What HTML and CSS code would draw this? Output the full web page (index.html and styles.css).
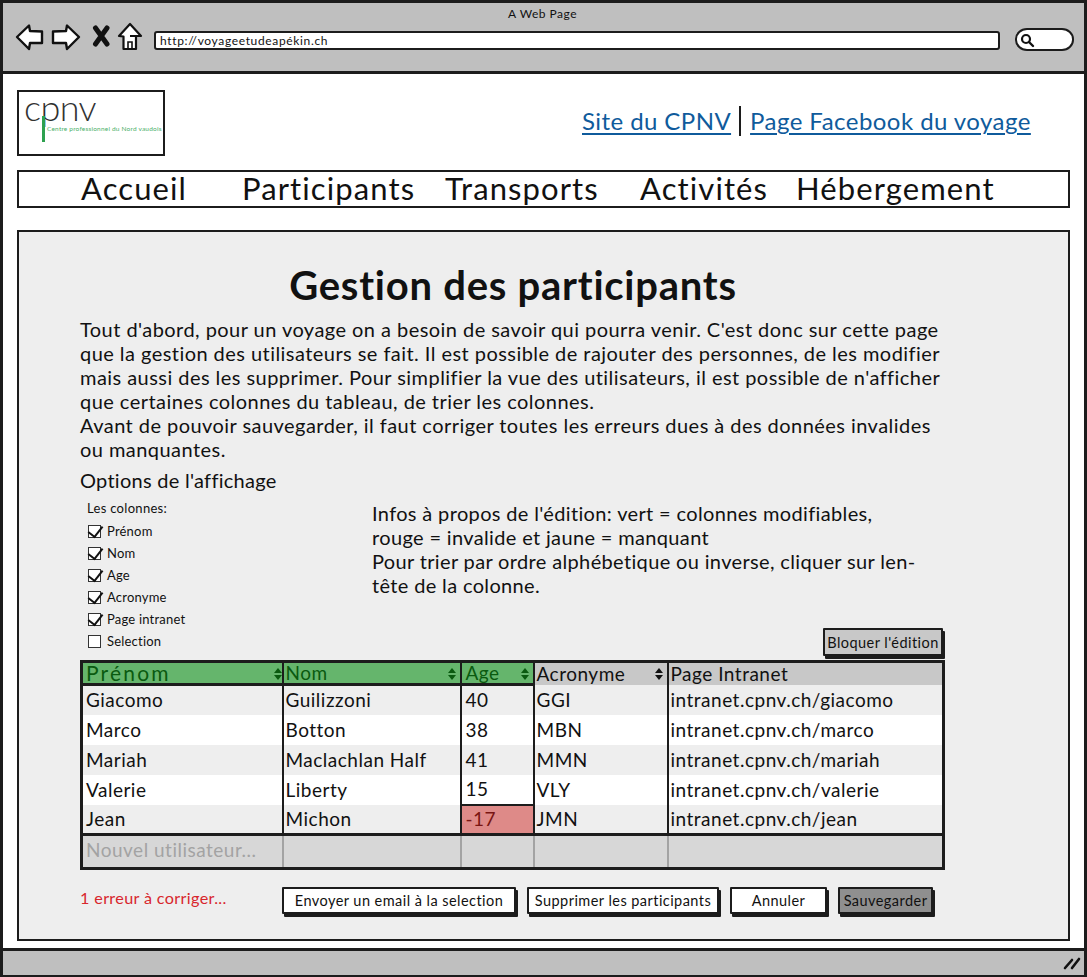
FILE: index.html
```html
<!DOCTYPE html>
<html lang="fr">
<head>
<meta charset="utf-8">
<title>A Web Page</title>
<link rel="stylesheet" href="styles.css">
</head>
<body>
<div class="window">
  <header class="chrome">
    <div class="chrome-title">A Web Page</div>
    <div class="chrome-row">
      <svg class="nav-icons" width="128" height="30" viewBox="0 0 128 30" aria-hidden="true">
        <path d="M2 15 L14 3.500 L15 9 L27 9.500 L27 21 L15 21 L14 27 Z" fill="#fff" stroke="#111" stroke-width="2.400" stroke-linejoin="round"/>
        <path d="M64 15 L52 3.500 L51 9 L38 9.500 L38 21 L51 21 L52 27 Z" fill="#fff" stroke="#111" stroke-width="2.400" stroke-linejoin="round"/>
        <path d="M80.500 6 L92 22 M92 6 L80.500 22" fill="none" stroke="#111" stroke-width="5" stroke-linecap="round"/>
        <path d="M115 14 L115 14 L126 14 L115 2 L104 14 L108.500 14.500 L108.500 27 L121 27 L121 14" fill="#fff" stroke="#111" stroke-width="2.200" stroke-linejoin="round"/>
        <path d="M113 27 L113 20 L117 20 L117 27" fill="none" stroke="#111" stroke-width="1.600"/>
      </svg>
      <div class="url-bar">http://voyageetudeapékin.ch</div>
      <div class="search-pill">
        <svg width="16" height="16" viewBox="0 0 16 16" aria-hidden="true">
          <circle cx="7" cy="7" r="4" fill="none" stroke="#111" stroke-width="2.200"/>
          <path d="M10 10 L14 14" stroke="#111" stroke-width="2.400" stroke-linecap="round"/>
        </svg>
      </div>
    </div>
  </header>

  <main class="page">
    <div class="top">
      <div class="logo">
        <div class="logo-word"><span>c</span><span class="logo-p">p</span><span>nv</span></div>
        <span class="logo-stem"></span>
        <div class="logo-sub">Centre professionnel du Nord vaudois</div>
      </div>
      <div class="links">
        <a class="link link-first" href="#">Site du CPNV</a>
        <a class="link link-second" href="#">Page Facebook du voyage</a>
      </div>
    </div>

    <nav class="menu">
      <span class="menu-item">Accueil</span>
      <span class="menu-item">Participants</span>
      <span class="menu-item">Transports</span>
      <span class="menu-item">Activités</span>
      <span class="menu-item">Hébergement</span>
    </nav>

    <section class="panel">
      <h1 class="title">Gestion des participants</h1>
      <p class="intro">Tout d'abord, pour un voyage on a besoin de savoir qui pourra venir. C'est donc sur cette page<br>
      que la gestion des utilisateurs se fait. Il est possible de rajouter des personnes, de les modifier<br>
      mais aussi des les supprimer. Pour simplifier la vue des utilisateurs, il est possible de n'afficher<br>
      que certaines colonnes du tableau, de trier les colonnes.<br>
      Avant de pouvoir sauvegarder, il faut corriger toutes les erreurs dues à des données invalides<br>
      ou manquantes.</p>
      <h2 class="options-title">Options de l'affichage</h2>

      <div class="options">
        <div class="columns">
          <div class="columns-label">Les colonnes:</div>
          <div class="check"><span class="box checked"></span>Prénom</div>
          <div class="check"><span class="box checked"></span>Nom</div>
          <div class="check"><span class="box checked"></span>Age</div>
          <div class="check"><span class="box checked"></span>Acronyme</div>
          <div class="check"><span class="box checked"></span>Page intranet</div>
          <div class="check"><span class="box"></span>Selection</div>
        </div>
        <div class="info">
          <p class="info-text">Infos à propos de l'édition: vert = colonnes modifiables,<br>
          rouge = invalide et jaune = manquant<br>
          Pour trier par ordre alphébetique ou inverse, cliquer sur len-<br>
          tête de la colonne.</p>
          <button class="btn btn-lock">Bloquer l'édition</button>
        </div>
      </div>

      <table class="grid">
        <colgroup>
          <col class="c1"><col class="c2"><col class="c3"><col class="c4"><col class="c5">
        </colgroup>
        <thead>
          <tr>
            <th class="green wide">Prénom<span class="sort"></span></th>
            <th class="green">Nom<span class="sort sort-in"></span></th>
            <th class="green">Age<span class="sort sort-in"></span></th>
            <th>Acronyme<span class="sort sort-in"></span></th>
            <th>Page Intranet</th>
          </tr>
        </thead>
        <tbody>
          <tr><td>Giacomo</td><td>Guilizzoni</td><td>40</td><td>GGI</td><td>intranet.cpnv.ch/giacomo</td></tr>
          <tr><td>Marco</td><td>Botton</td><td>38</td><td>MBN</td><td>intranet.cpnv.ch/marco</td></tr>
          <tr><td>Mariah</td><td>Maclachlan Half</td><td>41</td><td>MMN</td><td>intranet.cpnv.ch/mariah</td></tr>
          <tr><td>Valerie</td><td>Liberty</td><td>15</td><td>VLY</td><td>intranet.cpnv.ch/valerie</td></tr>
          <tr><td>Jean</td><td>Michon</td><td class="bad">-17</td><td>JMN</td><td>intranet.cpnv.ch/jean</td></tr>
          <tr class="new-row"><td>Nouvel utilisateur...</td><td></td><td></td><td></td><td></td></tr>
        </tbody>
      </table>

      <div class="actions">
        <span class="error">1 erreur à corriger...</span>
        <button class="btn btn-mail">Envoyer un email à la selection</button>
        <button class="btn btn-del">Supprimer les participants</button>
        <button class="btn btn-cancel">Annuler</button>
        <button class="btn btn-save">Sauvegarder</button>
      </div>
    </section>
  </main>

  <footer class="status">
    <svg width="18" height="14" viewBox="0 0 18 14" aria-hidden="true">
      <path d="M2 12 L9 4 M9 12 L16 3" stroke="#111" stroke-width="2.600" stroke-linecap="round"/>
    </svg>
  </footer>
</div>
</body>
</html>
```

FILE: styles.css
```css
* { box-sizing: border-box; }
html, body { margin: 0; padding: 0; background: #fff; }
body { font-family: "Lato", "Open Sans", sans-serif; color: #111; }

.window {
  width: 1087px;
  height: 977px;
  border: 3px solid #1c1c1c;
  border-bottom-width: 2px;
  display: flex;
  flex-direction: column;
  overflow: hidden;
  background: #fff;
}

/* browser chrome */
.chrome {
  height: 71px;
  flex: none;
  background: #bfbfbf;
  border-bottom: 3px solid #1c1c1c;
  display: flex;
  flex-direction: column;
}
.chrome-title {
  text-align: center;
  font-size: 12px;
  line-height: 14px;
  letter-spacing: .5px;
  padding-top: 4px;
  height: 18px;
  padding-right: 2px;
}
.chrome-row {
  display: flex;
  align-items: center;
  padding: 0 10px 0 12px;
  margin-top: 3px;
  height: 32px;
}
.nav-icons { flex: none; margin-right: 11px; margin-bottom: 6px; }
.url-bar {
  flex: none;
  width: 846px;
  height: 19px;
  background: #fff;
  border: 2px solid #1c1c1c;
  border-radius: 3px;
  font-size: 12px;
  line-height: 15px;
  letter-spacing: .65px;
  padding-left: 4px;
}
.search-pill {
  flex: none;
  width: 59px;
  height: 23px;
  margin-left: 15px;
  margin-bottom: 2px;
  background: #fff;
  border: 2px solid #1c1c1c;
  border-radius: 12px / 11px;
  padding: 2px 0 0 2px;
  display: flex;
  align-items: flex-start;
}

/* page */
.page {
  flex: 1;
  min-height: 0;
  padding: 16px 14px 0;
  display: flex;
  flex-direction: column;
}
.top { display: flex; align-items: flex-start; height: 65px; flex: none; }
.logo {
  position: relative;
  width: 148px;
  height: 66px;
  background: #fff;
  border: 2px solid #1c1c1c;
  flex: none;
}
.logo-word {
  position: absolute;
  left: 5px;
  top: -1px;
  font-size: 36px;
  line-height: 32px;
  font-weight: 300;
  color: #333;
  letter-spacing: -.6px;
}
.logo-p { color: #2f2f2f; }
.logo-stem {
  position: absolute;
  left: 23px;
  top: 24px;
  width: 2.500px;
  height: 26px;
  background: #2ea14f;
}
.logo-sub {
  position: absolute;
  left: 28px;
  top: 32px;
  font-size: 6.500px;
  line-height: 9px;
  letter-spacing: .2px;
  color: #4caf6a;
  white-space: nowrap;
}
.links {
  margin-left: 417px;
  margin-top: 16px;
  display: flex;
  align-items: center;
}
.link {
  font-size: 24px;
  line-height: 30px;
  color: #0f5b9c;
  text-decoration: underline;
  text-decoration-thickness: 1.500px;
  text-underline-offset: 3px;
  white-space: nowrap;
}
.link-first { padding-right: 8px; border-right: 2px solid #1c1c1c; letter-spacing: .42px; }
.link-second { padding-left: 9px; letter-spacing: .45px; }

.menu {
  flex: none;
  margin-top: 15px;
  height: 38px;
  border: 2px solid #1c1c1c;
  display: grid;
  grid-template-columns: 161px 203px 195px 156px 1fr;
  padding: 0 0 2px 62px;
  align-items: center;
}
.menu-item {
  font-size: 31px;
  line-height: 32px;
  letter-spacing: 1.100px;
  white-space: nowrap;
}

.panel {
  flex: none;
  margin-top: 22px;
  height: 711px;
  background: #eee;
  border: 2px solid #1c1c1c;
  padding: 0 0 0 61px;
}
.title {
  margin: 30px 0 0;
  width: 866px;
  text-align: center;
  font-size: 40px;
  line-height: 46px;
  font-weight: 700;
  letter-spacing: .75px;
}
.intro {
  margin: 9px 0 0;
  font-size: 20px;
  line-height: 24px;
  letter-spacing: .45px;
  white-space: nowrap;
}
.options-title {
  margin: 7px 0 0;
  font-size: 20px;
  line-height: 24px;
  font-weight: 400;
  letter-spacing: .27px;
}
.options { display: flex; height: 169px; }
.columns { width: 292px; flex: none; padding: 8px 0 0 7px; }
.columns-label { font-size: 13px; line-height: 16px; letter-spacing: .3px; height: 15px; }
.check {
  display: flex;
  align-items: center;
  height: 22px;
  font-size: 13px;
  letter-spacing: .2px;
}
.columns-label + .check { margin-top: 5px; }
.box {
  position: relative;
  width: 13px;
  height: 13px;
  margin: 1px 6px 0 1px;
  background: #fff;
  border: 1.500px solid #333;
  flex: none;
}
.box.checked::after {
  content: "";
  position: absolute;
  left: 2px;
  top: -3px;
  width: 7px;
  height: 12px;
  border: solid #111;
  border-width: 0 2.500px 2.500px 0;
  transform: rotate(38deg);
}
.info {
  flex: 1;
  min-width: 0;
  display: flex;
  flex-direction: column;
  padding-top: 9px;
}
.info-text {
  margin: 0;
  font-size: 20px;
  line-height: 24px;
  letter-spacing: .35px;
  white-space: nowrap;
}
.btn {
  font-family: inherit;
  color: #111;
  background: #fff;
  border: 2px solid #1c1c1c;
  box-shadow: 2px 3px 0 #1c1c1c;
  padding: 0;
  height: 27px;
  font-size: 14.500px;
  letter-spacing: .45px;
  border-radius: 1px;
  white-space: nowrap;
}
.btn-lock {
  align-self: flex-start;
  margin: auto 0 5px 451px;
  width: 120px;
  height: 28px;
  background: #c8c8c8;
}

.grid {
  width: 865px;
  table-layout: fixed;
  border-collapse: collapse;
  border: 3px solid #1c1c1c;
  font-size: 19px;
  line-height: 20px;
  letter-spacing: .5px;
  margin-top: -1px;
}
.c1 { width: 201px; }
.c2 { width: 178px; }
.c3 { width: 73px; }
.c4 { width: 134px; }
.grid th {
  position: relative;
  height: 23px;
  padding: 0 2px;
  text-align: left;
  font-weight: 400;
  background: #c8c8c8;
  border-right: 2px solid #1c1c1c;
}
.grid th.green {
  background: #65b56c;
  color: #0a5a10;
  border-bottom: 3px solid #1c1c1c;
}
.grid th.wide { font-size: 21px; letter-spacing: 2.200px; padding-left: 3px; }
.grid th:nth-child(3), .grid td:nth-child(3) { padding-left: 4px; }
.grid th:last-child { border-right: 0; }
.sort {
  position: absolute;
  right: 4px;
  top: 5px;
  width: 0;
  height: 13px;
}
.sort-in { right: 8px; }
.sort::before, .sort::after {
  content: "";
  position: absolute;
  left: -4px;
  width: 0;
  height: 0;
  border-left: 4px solid transparent;
  border-right: 4px solid transparent;
}
.sort::before { top: 0; border-bottom: 5px solid currentColor; }
.sort::after { top: 7px; border-top: 5px solid currentColor; }
.grid td {
  height: 30px;
  padding: 0 2px;
  border-right: 2px solid #1c1c1c;
  white-space: nowrap;
  overflow: hidden;
}
.grid td:first-child { padding-left: 3px; }
.grid td:last-child { border-right: 0; }
.grid tbody tr:nth-child(odd) td { background: #eee; }
.grid tbody tr:nth-child(even) td { background: #fff; }
.grid td.bad {
  background: #de8a88 !important;
  color: #7a1512;
  border: 2px solid #1c1c1c;
}
.grid tbody tr.new-row td {
  height: 34px;
  background: #d7d7d7;
  color: #a3a3a3;
  border-top: 3px solid #1c1c1c;
  border-right: 2px solid #a3a3a3;
  padding-bottom: 3px;
}
.grid tbody tr.new-row td:last-child { border-right: 0; }

.actions {
  display: flex;
  align-items: center;
  margin-top: 15px;
  height: 30px;
}
.error {
  width: 202px;
  flex: none;
  color: #d8262c;
  font-size: 16.200px;
  letter-spacing: .35px;
  margin-top: -5px;
}
.btn-mail { width: 234px; margin-right: 11px; }
.btn-del { width: 192px; margin-right: 11px; }
.btn-cancel { width: 97px; margin-right: 11px; }
.btn-save { width: 95px; background: #8f8f8f; }

.status {
  margin-top: auto;
  flex: none;
  height: 27px;
  background: #bfbfbf;
  border-top: 3px solid #1c1c1c;
  display: flex;
  justify-content: flex-end;
  align-items: center;
  padding-right: 3px;
}
```
